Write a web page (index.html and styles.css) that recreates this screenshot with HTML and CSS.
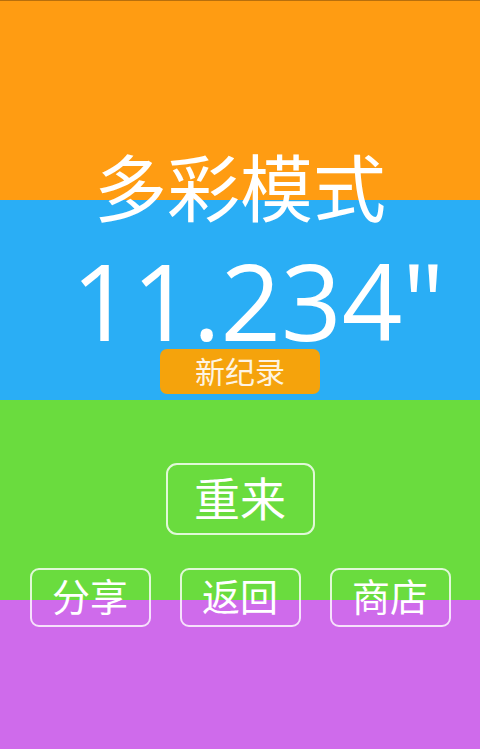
FILE: index.html
```html
<!DOCTYPE html>
<html lang="zh-CN">
<head>
<meta charset="utf-8">
<title>多彩模式</title>
<link rel="stylesheet" href="styles.css">
</head>
<body>
<main class="screen">
  <h1 class="title">多彩模式</h1>
  <div class="time">11.234"</div>
  <div class="badge">新纪录</div>
  <button class="btn btn-retry">重来</button>
  <div class="row">
    <button class="btn btn-small">分享</button>
    <button class="btn btn-small">返回</button>
    <button class="btn btn-small">商店</button>
  </div>
</main>
</body>
</html>
```

FILE: styles.css
```css
html, body {
  margin: 0;
  padding: 0;
}
body {
  width: 480px;
  height: 749px;
  overflow: hidden;
  background: linear-gradient(to bottom,
    #b86f0c 0 1px,
    #ff9c12 1px 200px,
    #2aaef5 200px 400px,
    #6adc3e 400px 600px,
    #cf6beb 600px 749px);
  font-family: "Noto Sans CJK SC", "Noto Sans", sans-serif;
  color: #ffffff;
}
.screen {
  display: flex;
  flex-direction: column;
  align-items: center;
}
.title {
  margin: 148px 0 0 0;
  font-size: 73px;
  line-height: 72px;
  font-weight: 400;
  letter-spacing: 0;
}
.time {
  margin-top: 35px;
  padding-left: 36px;
  font-family: "Open Sans", Roboto, "Liberation Sans", sans-serif;
  font-size: 106px;
  line-height: 90px;
  height: 90px;
  font-weight: 400;
}
.badge {
  margin-top: 4px;
  width: 160px;
  height: 45px;
  box-sizing: border-box;
  border-radius: 7px;
  background: #f5a30c;
  color: #fdf4e4;
  font-size: 30px;
  line-height: 43px;
  text-align: center;
}
.btn {
  font-family: "Noto Sans CJK SC", "Noto Sans", sans-serif;
  background: transparent;
  color: #ffffff;
  border: 2px solid rgba(255, 255, 255, 0.8);
  padding: 0 0 6px 0;
  box-sizing: border-box;
  cursor: pointer;
}
.btn-retry {
  margin-top: 69px;
  width: 149px;
  height: 72px;
  border-radius: 11px;
  font-size: 46px;
  line-height: 56px;
}
.row {
  margin-top: 33px;
  display: flex;
  gap: 29px;
}
.btn-small {
  width: 121px;
  height: 59px;
  border-radius: 9px;
  font-size: 38px;
  line-height: 46px;
}
```
